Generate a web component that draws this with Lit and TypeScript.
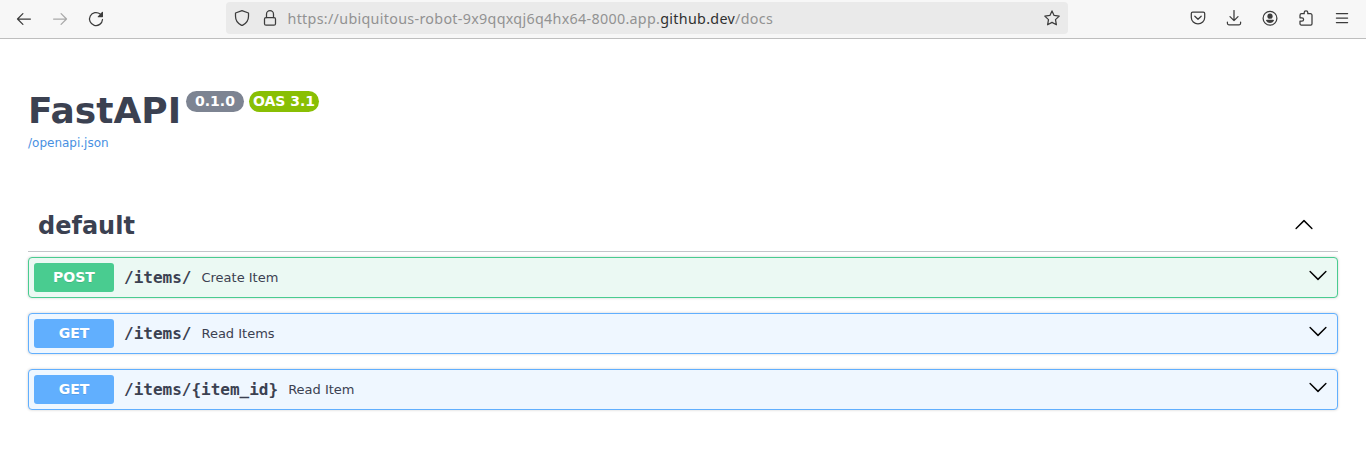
import { LitElement, html, css, svg } from "lit";
import { customElement, property } from "lit/decorators.js";

@customElement("browser-bar")
class BrowserBar extends LitElement {
  static styles = css`
    :host { display: flex; align-items: flex-start; height: 38px; background: #f7f7f7; border-bottom: 1px solid #bebebe; box-sizing: content-box; }
    svg { display: block; width: 16px; height: 16px; fill: none; stroke: #3c3c3c; stroke-width: 1.25; stroke-linecap: round; stroke-linejoin: round; flex: none; }
    .nav { display: flex; gap: 20px; width: 210px; padding: 10.5px 0 0 16px; box-sizing: border-box; }
    .muted { stroke: #a9a9a9; }
    .solid { fill: #3c3c3c; stroke: none; }
    .address { display: flex; align-items: center; width: 842px; height: 32px; margin: 2px 0 0 16px; padding: 0 8px; box-sizing: border-box; background: #eaeaea; border-radius: 4px; }
    .lock { margin: 0 9.5px 0 12px; }
    .url { flex: 1; padding-top: 2px; font: 14.3px/20px "Noto Sans", sans-serif; letter-spacing: 0.31px; color: #929292; white-space: nowrap; }
    .host { color: #303030; }
    .tools { display: flex; gap: 20px; margin-left: auto; padding: 10px 16px 0 0; }
  `;
  render() {
    return html`
      <div class="nav">
        <svg viewBox="0 0 16 16"><path d="M14.4 8H1.5M6.9 2.6L1.5 8l5.4 5.4" /></svg>
        <svg class="muted" viewBox="0 0 16 16"><path d="M1.6 8h12.9M9.1 2.6L14.5 8l-5.4 5.4" /></svg>
        <svg viewBox="0 0 16 16"><path d="M12.2 3.1A6.5 6.5 0 1 0 14.5 8.5" /><path class="solid" d="M15 1.3v4.3a.6.6 0 0 1-.6.6h-4.2c-.5 0-.7-.5-.4-.8L14 1c.4-.4 1-.2 1 .3z" /></svg>
      </div>
      <div class="address">
        <svg viewBox="0 0 16 16"><path d="M8 .7L14.5 3v3.2c0 3.8-2.3 7.100-5.7 8.900a1.700 1.700 0 0 1-1.600 0C3.800 13.300 1.500 10 1.500 6.200V3z" /></svg>
        <svg class="lock" viewBox="0 0 16 16"><rect x="2.5" y="7.5" width="11" height="7.7" rx="1.5" /><path d="M4.5 7.5V4.2a3.5 3.5 0 0 1 7 0v3.3" /></svg>
        <div class="url"><span>https://ubiquitous-robot-9x9qqxqj6q4hx64-8000.app.</span><span class="host">github.dev</span><span>/docs</span></div>
        <svg viewBox="0 0 16 16"><path d="M8 .9l2.1 4.5 5.1.7-3.7 3.5.9 5.2L8 12.4l-4.4 2.4.9-5.2L.8 6.1l5.1-.7z" /></svg>
      </div>
      <div class="tools">
        <svg viewBox="0 0 16 16"><path d="M2.7 2.1h10.6a1.4 1.4 0 0 1 1.4 1.4V7.500a6.700 6.300 0 0 1-13.400 0V3.500a1.400 1.400 0 0 1 1.400-1.400zM4.800 6.200L8 9.300l3.200-3.100" /></svg>
        <svg viewBox="0 0 16 16"><path d="M8 .5v10M4 6.600l4 4 4-4M1.400 12v1.300a1.500 1.500 0 0 0 1.500 1.500h10.200a1.500 1.500 0 0 0 1.500-1.500V12" /></svg>
        <svg viewBox="0 0 16 16"><circle cx="8" cy="8.3" r="6.9" /><circle class="solid" cx="8" cy="6.2" r="2.6" /><path class="solid" d="M4.800 9.800h6.400c.6 0 .9.500.7 1A4.600 4.600 0 0 1 8 13a4.600 4.600 0 0 1-3.900-2.200c-.2-.5.100-1 .7-1z" /></svg>
        <svg viewBox="0 0 16 16"><path d="M6.200 3.700V2.600a1.800 1.800 0 0 1 3.600 0v1.100h2.700a1.500 1.500 0 0 1 1.500 1.500v8.500a1.300 1.300 0 0 1-1.300 1.300H3.300A1.300 1.300 0 0 1 2 13.700v-2.500h1.900a1.700 1.700 0 0 0 0-3.400H2V5.200a1.500 1.500 0 0 1 1.500-1.500z" /></svg>
        <svg viewBox="0 0 16 16"><path d="M2.4 3.5h11.2M2.4 8h11.2M2.4 12.5h11.2" /></svg>
      </div>`;
  }
}

const chevron = (up: boolean) => html`<svg class="chevron" viewBox="0 0 20 20">
  ${up
    ? svg`<path d="M17.418 14.908a.697.697 0 0 0 .979 0 .68.68 0 0 0 0-.969l-7.908-7.830a.697.697 0 0 0-.979 0l-7.908 7.830a.68.68 0 0 0 0 .969.697.697 0 0 0 .979 0L10 7.750z" />`
    : svg`<path d="M17.418 6.109a.697.697 0 0 1 .979 0 .68.68 0 0 1 0 .969l-7.908 7.830a.697.697 0 0 1-.979 0L1.602 7.078a.68.68 0 0 1 0-.969.697.697 0 0 1 .979 0L10 13.250z" />`}
</svg>`;

@customElement("api-operation")
class ApiOperation extends LitElement {
  @property() method = "GET";
  @property() path = "";
  @property() summary = "";
  static styles = css`
    :host { display: block; }
    .row { display: flex; align-items: center; height: 41px; box-sizing: border-box; padding: 0 9px 0 5px; border: 1px solid #61affe; border-radius: 4px; background: #eff7ff; box-shadow: 0 0 3px rgba(0, 0, 0, 0.19); color: #3b4151; }
    .row.post { border-color: #49cc90; background: #ebf9f3; }
    .method { width: 80px; height: 29px; border-radius: 3px; background: #61affe; color: #fff; font: bold 14px/29px "DejaVu Sans", sans-serif; text-align: center; text-shadow: 0 1px 0 rgba(0, 0, 0, 0.1); }
    .post .method { background: #49cc90; }
    .path { padding: 0 10px; font: bold 16px/20px "DejaVu Sans Mono", monospace; }
    .summary { flex: 1; font: 13px/16px "DejaVu Sans", sans-serif; }
    .chevron { width: 20px; height: 20px; margin-bottom: 5px; }
  `;
  render() {
    return html`<div class="row ${this.method.toLowerCase()}">
      <span class="method">${this.method}</span>
      <span class="path">${this.path}</span>
      <span class="summary">${this.summary}</span>
      ${chevron(false)}
    </div>`;
  }
}

@customElement("app-root")
class AppRoot extends LitElement {
  static styles = css`
    :host { display: block; height: 451px; overflow: hidden; background: #fff; color: #3b4151; font-family: "DejaVu Sans", sans-serif; }
    main { padding: 51px 28px 0; }
    .title { display: flex; align-items: flex-start; height: 46px; font: bold 36px/42px "DejaVu Sans", sans-serif; }
    h1 { margin: 0; font: inherit; }
    .badge { height: 21px; margin: 1px 0 0 5px; padding: 0 9px; border-radius: 11px; background: #7d8492; color: #fff; font: bold 14px/20px "DejaVu Sans", sans-serif; }
    .oas { padding: 0 4px; background: #89bf04; }
    .spec { display: block; width: max-content; color: #4990e2; font-size: 12px; line-height: 14px; text-decoration: none; }
    .tag { display: flex; align-items: center; justify-content: space-between; height: 52px; margin: 50px 0 5px; padding: 0 24px 0 10px; box-sizing: border-box; border-bottom: 1px solid rgba(59, 65, 81, 0.3); }
    h2 { margin: 0; font-size: 24px; line-height: 30px; }
    .chevron { width: 20px; height: 20px; margin-bottom: 3px; fill: #000; }
    .operations { display: grid; gap: 15px; }
  `;
  render() {
    return html`
      <browser-bar></browser-bar>
      <main>
        <div class="title"><h1>FastAPI</h1><span class="badge">0.1.0</span><span class="badge oas">OAS 3.1</span></div>
        <a class="spec">/openapi.json</a>
        <div class="tag"><h2>default</h2>${chevron(true)}</div>
        <div class="operations">
          <api-operation method="POST" path="/items/" summary="Create Item"></api-operation>
          <api-operation method="GET" path="/items/" summary="Read Items"></api-operation>
          <api-operation method="GET" path="/items/{item_id}" summary="Read Item"></api-operation>
        </div>
      </main>`;
  }
}
